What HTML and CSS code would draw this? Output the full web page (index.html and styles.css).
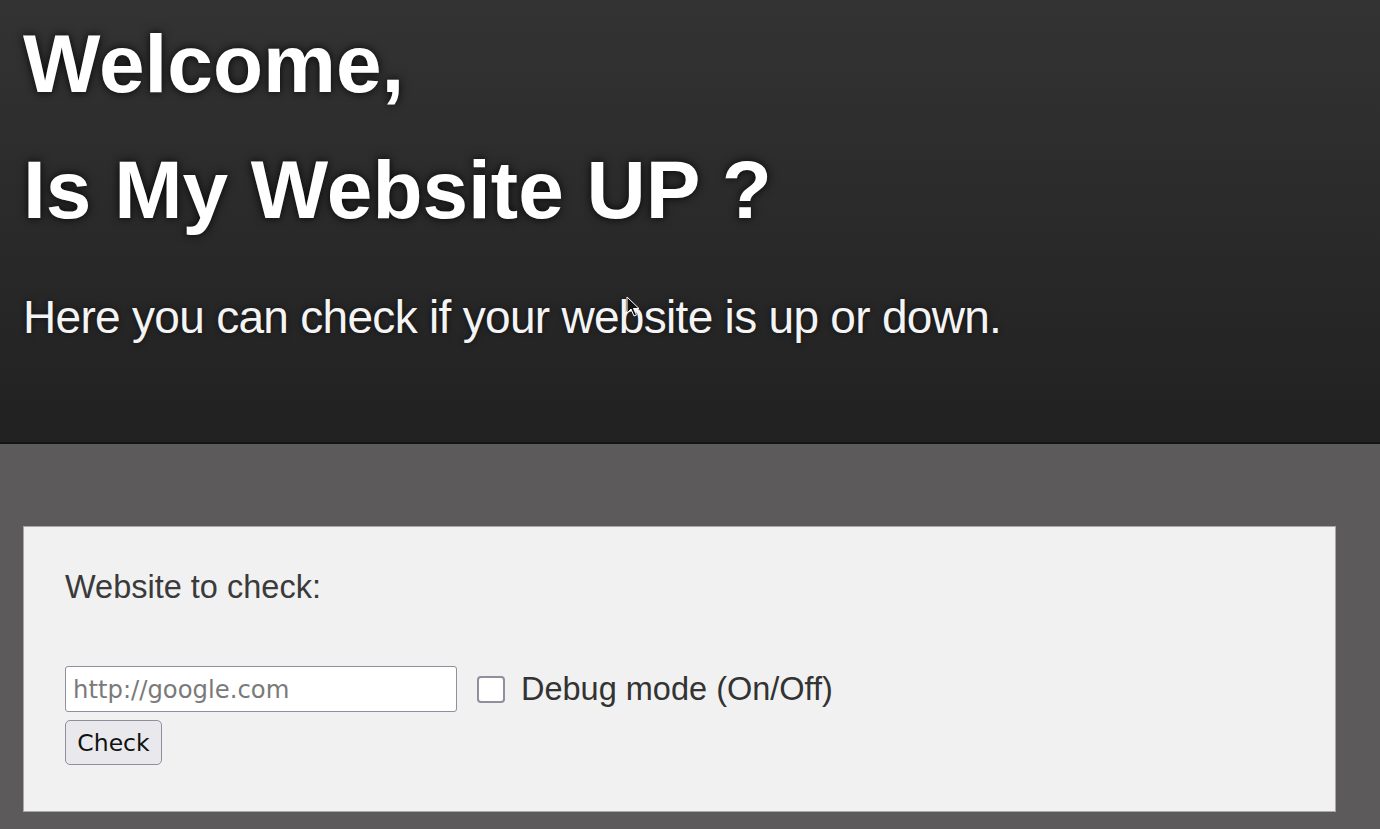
FILE: index.html
```html
<!DOCTYPE html>
<html lang="en">
<head>
<meta charset="utf-8">
<title>Is My Website UP ?</title>
<link rel="stylesheet" href="styles.css">
</head>
<body>
<header class="hero">
  <h1 class="hero-title">Welcome,<br>Is My Website UP ?</h1>
  <p class="hero-sub">Here you can check if your website is up or down.</p>
  <svg class="cursor" width="14" height="22" viewBox="0 0 14 22" aria-hidden="true"><path d="M1 1 L1 17 L5 13 L8 20 L10.5 19 L7.5 12.5 L13 12.5 Z" fill="#111" stroke="#fff" stroke-width="1"/></svg>
</header>
<main class="content">
  <form class="card" onsubmit="return false">
    <label class="field-label" for="site">Website to check:</label>
    <div class="row">
      <input id="site" class="url-input" type="text" placeholder="http://google.com">
      <label class="debug">
        <input type="checkbox" class="debug-box">
        <span>Debug mode (On/Off)</span>
      </label>
    </div>
    <button class="check-btn" type="submit">Check</button>
  </form>
</main>
</body>
</html>
```

FILE: styles.css
```css
html, body {
  margin: 0;
  padding: 0;
}
body {
  background: #5c5a5b;
  font-family: "Liberation Sans", Arial, sans-serif;
  min-height: 829px;
}
.hero {
  position: relative;
  background: linear-gradient(to bottom, #333333 0%, #2a2a2a 50%, #212121 100%);
  border-bottom: 2px solid #141414;
  padding: 1px 23px 98px 23px;
  color: #fff;
}
.hero-title {
  margin: 0;
  font-size: 82px;
  line-height: 126px;
  font-weight: bold;
  color: #fff;
  text-shadow: 0 0 10px rgba(0, 0, 0, 0.9);
}
.hero-sub {
  margin: 38px 0 0 0;
  font-size: 46px;
  line-height: 53px;
  letter-spacing: -0.7px;
  color: #f4f4f4;
  text-shadow: 0 0 6px rgba(0, 0, 0, 0.6);
}
.cursor {
  position: absolute;
  left: 626px;
  top: 296px;
}
.content {
  padding: 82px 0 18px 23px;
}
.card {
  width: 1230px;
  background: #f1f1f1;
  border: 1px solid #a8a8a8;
  padding: 42px 40px 46px 41px;
  display: flex;
  flex-direction: column;
  align-items: flex-start;
}
.field-label {
  font-size: 32.5px;
  line-height: 37px;
  color: #3a3a3a;
}
.row {
  margin-top: 60px;
  display: flex;
  align-items: center;
}
.url-input {
  box-sizing: border-box;
  width: 392px;
  height: 46px;
  margin: 0;
  padding: 0 7px;
  border: 1.5px solid #8f8f9d;
  border-radius: 3px;
  background: #fff;
  font-family: "DejaVu Sans", sans-serif;
  font-size: 24.3px;
  color: #222;
}
.url-input::placeholder {
  color: #7a7a7a;
}
.debug {
  display: flex;
  align-items: center;
  margin-left: 20px;
  font-size: 32.5px;
  color: #333;
}
.debug-box {
  appearance: none;
  -webkit-appearance: none;
  box-sizing: border-box;
  width: 28px;
  height: 27px;
  margin: 0 16px 0 0;
  border: 2.5px solid #8f8f9d;
  border-radius: 4px;
  background: #fff;
}
.check-btn {
  box-sizing: border-box;
  margin-top: 8px;
  width: 97px;
  height: 45px;
  padding: 0;
  background: #e9e9ed;
  border: 1.5px solid #8f8f9d;
  border-radius: 5px;
  font-family: "DejaVu Sans", sans-serif;
  font-size: 23.5px;
  color: #111;
}
```
